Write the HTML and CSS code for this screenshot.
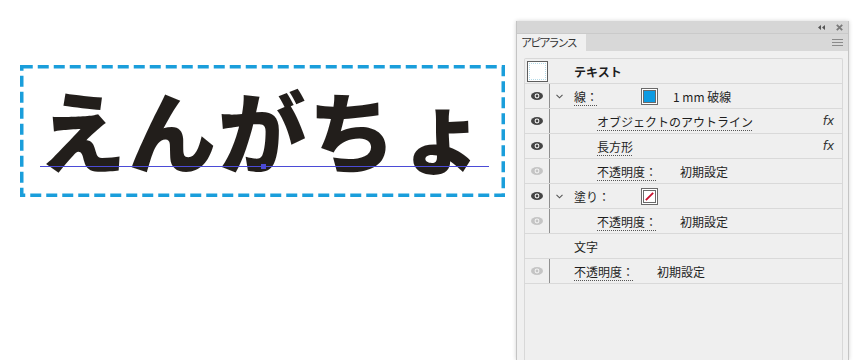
FILE: index.html
```html
<!DOCTYPE html>
<html lang="ja">
<head>
    <meta charset="UTF-8">
    <meta name="viewport" content="width=device-width, initial-scale=1.0">
    <title>アピアランス</title>
    <link rel="stylesheet" href="styles.css">
</head>
<body>

    <div class="page">
        <div class="artboard">
            <svg class="art" width="494" height="140" viewBox="0 0 494 140">
                <rect x="3.75" y="3.75" width="481.5" height="128.5" fill="none" stroke="#1a9edb" stroke-width="3.5" stroke-dasharray="11 5"/>
                <text class="art-text" x="20" y="103">えんがちょ</text>
                <line x1="22" y1="103.5" x2="471" y2="103.5" stroke="#4b4bd6" stroke-width="1"/>
                <rect x="243" y="101" width="5" height="5" fill="#4b4bd6"/>
            </svg>
        </div>

        <div class="panel">
            <div class="titlebar">
                <svg class="collapse" width="7" height="5" viewBox="0 0 7 5"><path d="M3 0 L0 2.5 L3 5 Z M7 0 L4 2.5 L7 5 Z" fill="#555"/></svg>
                <svg class="close" width="7" height="7" viewBox="0 0 7 7"><path d="M0.8 0.8 L6.2 6.2 M6.2 0.8 L0.8 6.2" stroke="#7a7a7a" stroke-width="1.8"/></svg>
            </div>
            <div class="tabs">
                <div class="tab">アピアランス</div>
                <div class="menu"><i></i><i></i><i></i></div>
            </div>
            <div class="body">
                <div class="list">
                    <div class="row">
                        <span class="eye-col"><span class="thumb"><i></i></span></span>
                        <span class="gap"></span>
                        <span class="name bold">テキスト</span>
                    </div>
                    <div class="row">
                        <span class="eye-col sep"><svg class="eye" width="12" height="8" viewBox="0 0 12 8"><ellipse cx="6" cy="4" rx="6" ry="4" fill="#444"/><circle cx="6" cy="4" r="2.4" fill="#fff"/><circle cx="6" cy="4" r="1.4" fill="#444"/></svg></span>
                        <span class="twist"><svg width="7" height="5" viewBox="0 0 7 5"><path d="M0.5 0.8 L3.5 3.8 L6.5 0.8" fill="none" stroke="#555" stroke-width="1.1"/></svg></span>
                        <span class="label short"><u>線：</u></span>
                        <span class="swatch"><i class="fill-blue"></i></span>
                        <span class="value">1 mm 破線</span>
                    </div>
                    <div class="row">
                        <span class="eye-col sep"><svg class="eye" width="12" height="8" viewBox="0 0 12 8"><ellipse cx="6" cy="4" rx="6" ry="4" fill="#444"/><circle cx="6" cy="4" r="2.4" fill="#fff"/><circle cx="6" cy="4" r="1.4" fill="#444"/></svg></span>
                        <span class="indent"></span>
                        <span class="name"><u>オブジェクトのアウトライン</u></span>
                        <span class="fx">fx</span>
                    </div>
                    <div class="row">
                        <span class="eye-col sep"><svg class="eye" width="12" height="8" viewBox="0 0 12 8"><ellipse cx="6" cy="4" rx="6" ry="4" fill="#444"/><circle cx="6" cy="4" r="2.4" fill="#fff"/><circle cx="6" cy="4" r="1.4" fill="#444"/></svg></span>
                        <span class="indent"></span>
                        <span class="name"><u>長方形</u></span>
                        <span class="fx">fx</span>
                    </div>
                    <div class="row">
                        <span class="eye-col sep"><svg class="eye" width="12" height="8" viewBox="0 0 12 8"><ellipse cx="6" cy="4" rx="6" ry="4" fill="#c4c4c4"/><circle cx="6" cy="4" r="2.4" fill="#f4f4f4"/><circle cx="6" cy="4" r="1.4" fill="#c4c4c4"/></svg></span>
                        <span class="indent"></span>
                        <span class="label"><u>不透明度：</u></span>
                        <span class="value">初期設定</span>
                    </div>
                    <div class="row">
                        <span class="eye-col sep"><svg class="eye" width="12" height="8" viewBox="0 0 12 8"><ellipse cx="6" cy="4" rx="6" ry="4" fill="#444"/><circle cx="6" cy="4" r="2.4" fill="#fff"/><circle cx="6" cy="4" r="1.4" fill="#444"/></svg></span>
                        <span class="twist"><svg width="7" height="5" viewBox="0 0 7 5"><path d="M0.5 0.8 L3.5 3.8 L6.5 0.8" fill="none" stroke="#555" stroke-width="1.1"/></svg></span>
                        <span class="label short">塗り：</span>
                        <span class="swatch"><svg width="12" height="12" viewBox="0 0 12 12"><rect width="12" height="12" fill="#fff"/><line x1="2" y1="10" x2="10" y2="2" stroke="#c8102e" stroke-width="2"/></svg></span>
                    </div>
                    <div class="row">
                        <span class="eye-col sep"><svg class="eye" width="12" height="8" viewBox="0 0 12 8"><ellipse cx="6" cy="4" rx="6" ry="4" fill="#c4c4c4"/><circle cx="6" cy="4" r="2.4" fill="#f4f4f4"/><circle cx="6" cy="4" r="1.4" fill="#c4c4c4"/></svg></span>
                        <span class="indent"></span>
                        <span class="label"><u>不透明度：</u></span>
                        <span class="value">初期設定</span>
                    </div>
                    <div class="row">
                        <span class="eye-col"></span>
                        <span class="gap"></span>
                        <span class="name">文字</span>
                    </div>
                    <div class="row">
                        <span class="eye-col sep"><svg class="eye" width="12" height="8" viewBox="0 0 12 8"><ellipse cx="6" cy="4" rx="6" ry="4" fill="#c4c4c4"/><circle cx="6" cy="4" r="2.4" fill="#f4f4f4"/><circle cx="6" cy="4" r="1.4" fill="#c4c4c4"/></svg></span>
                        <span class="twist"></span>
                        <span class="label"><u>不透明度：</u></span>
                        <span class="value">初期設定</span>
                    </div>
                </div>
            </div>
        </div>
    </div>

</body>
</html>
```

FILE: styles.css
```css
*{
    padding: 0;
    margin: 0;
    box-sizing: border-box;
}

body{
    background-color: #ffffff;
    width: 866px;
    height: 360px;
    overflow: hidden;
    font-family: "Noto Sans CJK JP", "Noto Sans", sans-serif;
    font-size: 12px;
    color: #1e1e1e;
}

.page{
    display: flex;
    height: 360px;
}

/* plan de travail */
.artboard{
    width: 516px;
    flex-shrink: 0;
    padding: 63px 0 0 18px;
}

.art-text{
    font-family: "Noto Sans CJK JP", sans-serif;
    font-weight: 900;
    font-size: 88px;
    fill: #221e1b;
    letter-spacing: 2px;
}

/* panneau */
.panel{
    width: 333px;
    margin-top: 21px;
    display: flex;
    flex-direction: column;
    border-left: 1px solid #c4c4c4;
    border-right: 1px solid #c4c4c4;
    box-shadow: 0 0 4px rgba(0, 0, 0, 0.18);
    background-color: #f0f0f0;
}

.titlebar{
    height: 12px;
    background-color: #d6d6d6;
    display: flex;
    justify-content: flex-end;
    align-items: center;
    gap: 11px;
    padding-right: 5px;
}

.tabs{
    height: 18px;
    background-color: #d8d8d8;
    border-top: 1px solid #cacaca;
    display: flex;
    justify-content: space-between;
}

.tab{
    width: 69px;
    background-color: #f0f0f0;
    padding-left: 4px;
    line-height: 17px;
    font-size: 11px;
    color: #333;
    letter-spacing: -1.8px;
    white-space: nowrap;
}

.menu{
    display: flex;
    flex-direction: column;
    gap: 2px;
    padding: 5px 5px 0 0;
}

.menu i{
    display: block;
    width: 11px;
    height: 1px;
    background-color: #8a8a8a;
}

.body{
    flex: 1;
    padding: 7px 5px 0 7px;
    display: flex;
}

.list{
    flex: 1;
    border: 1px solid #d8d8d8;
    border-bottom: none;
    border-radius: 2px 2px 0 0;
    background-color: #efefef;
}

.row{
    height: 25px;
    border-bottom: 1px solid #d9d9d9;
    display: flex;
    align-items: center;
}

.eye-col{
    width: 25px;
    height: 24px;
    flex-shrink: 0;
    display: flex;
    justify-content: center;
    align-items: center;
}

.eye-col.sep{
    border-right: 1px solid #8f8f8f;
}

.gap,
.twist{
    width: 24px;
    flex-shrink: 0;
    display: flex;
    justify-content: center;
    align-items: center;
    padding-right: 6px;
}

.indent{
    width: 47px;
    flex-shrink: 0;
}

.thumb{
    display: block;
    width: 21px;
    height: 21px;
    border: 1px solid #5e5e5e;
    background-color: #fff;
    padding: 1px;
}

.thumb i{
    display: block;
    width: 100%;
    height: 100%;
    border: 1px dotted #b5dbe8;
}

.name{
    white-space: nowrap;
}

.bold{
    font-weight: bold;
}

u{
    text-decoration: underline dotted #555;
    text-underline-offset: 3px;
}

.label{
    width: 83px;
    flex-shrink: 0;
    white-space: nowrap;
}

.label.short{
    width: 67px;
}

.swatch{
    width: 17px;
    height: 17px;
    flex-shrink: 0;
    border: 1px solid #6a6a6a;
    background-color: #fff;
    padding: 1px;
    display: flex;
}

.swatch i{
    flex: 1;
    border: 1px solid #6a6a6a;
}

.swatch svg{
    border: 1px solid #6a6a6a;
    width: 13px;
    height: 13px;
}

.fill-blue{
    background-color: #0e9be2;
}

.swatch + .value{
    margin-left: 15px;
}

.value{
    white-space: nowrap;
}

.fx{
    margin-left: auto;
    padding-right: 8px;
    font-family: "DejaVu Sans", sans-serif;
    font-style: italic;
    font-size: 12px;
    color: #333;
}
```
